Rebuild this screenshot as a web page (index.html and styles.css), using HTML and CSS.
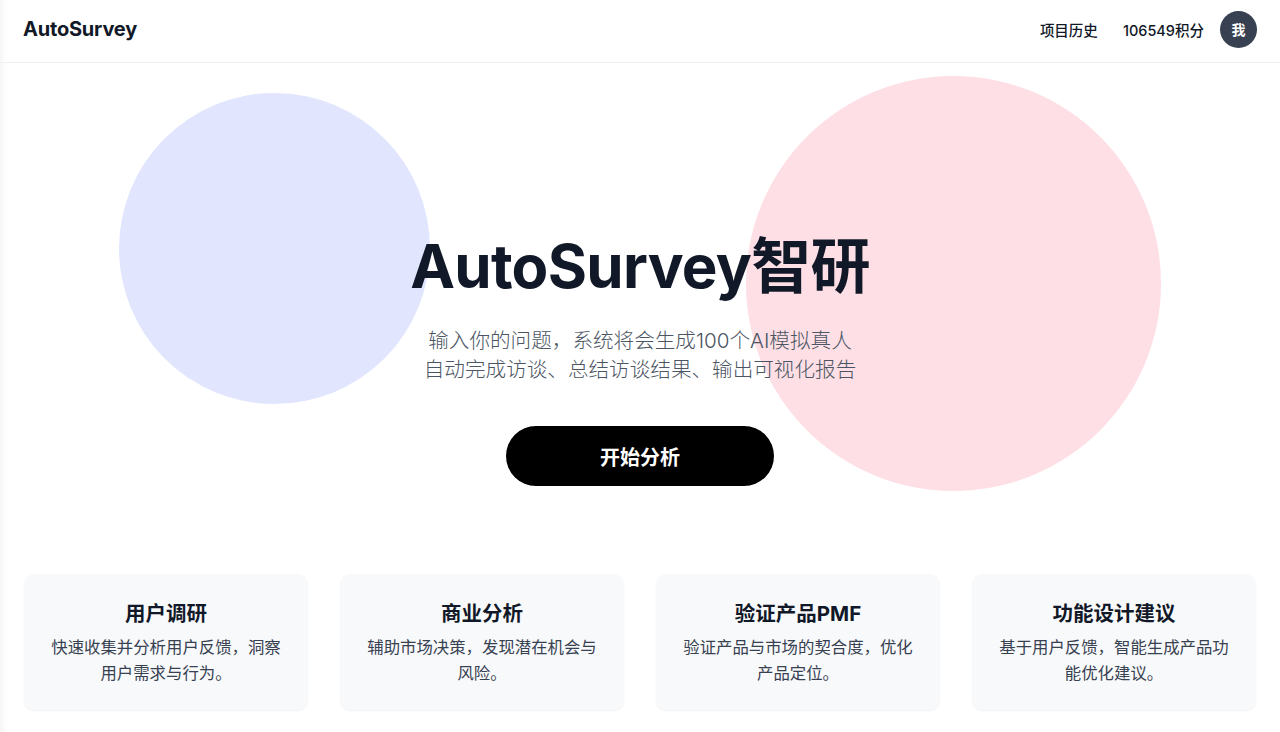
FILE: index.html
```html
<!DOCTYPE html>
<html lang="zh-CN">

<head>
    <meta charset="UTF-8">
    <meta name="viewport" content="width=device-width, initial-scale=1.0">
    <title>AutoSurvey智研</title>
    <link rel="stylesheet" href="styles.css">
</head>

<body>
    <div class="page">
        <header class="topbar">
            <div class="logo">AutoSurvey</div>
            <nav class="nav">
                <a href="#" class="nav-link">项目历史</a>
                <span class="credits">106549积分</span>
                <div class="avatar">我</div>
            </nav>
        </header>

        <main class="hero">
            <!-- 背景装饰圆 -->
            <div class="blob blob-blue"></div>
            <div class="blob blob-pink"></div>

            <h1 class="hero-title">AutoSurvey智研</h1>
            <p class="hero-desc">输入你的问题，系统将会生成100个AI模拟真人<br>自动完成访谈、总结访谈结果、输出可视化报告</p>
            <button class="start-btn">开始分析</button>
        </main>

        <section class="features">
            <div class="card">
                <h3>用户调研</h3>
                <p>快速收集并分析用户反馈，洞察用户需求与行为。</p>
            </div>
            <div class="card">
                <h3>商业分析</h3>
                <p>辅助市场决策，发现潜在机会与风险。</p>
            </div>
            <div class="card">
                <h3>验证产品PMF</h3>
                <p>验证产品与市场的契合度，优化产品定位。</p>
            </div>
            <div class="card">
                <h3>功能设计建议</h3>
                <p>基于用户反馈，智能生成产品功能优化建议。</p>
            </div>
        </section>
    </div>
</body>

</html>
```

FILE: styles.css
```css
body {
    margin: 0;
    padding: 0;
    font-family: Inter, "Noto Sans CJK SC", sans-serif;
    background-color: #fff;
    color: #111827;
}

.page {
    min-height: 732px;
    box-shadow: inset 10px 0 10px -10px rgba(0, 0, 0, 0.08);
}

.topbar {
    box-sizing: border-box;
    height: 63px;
    padding: 0 23px 4px 23px;
    display: flex;
    align-items: center;
    justify-content: space-between;
    border-bottom: 1px solid #f1f1f3;
}

.logo {
    font-size: 20px;
    font-weight: 700;
    letter-spacing: -0.2px;
    color: #111827;
}

.nav {
    display: flex;
    align-items: center;
}

.nav-link,
.credits {
    font-size: 14.5px;
    font-weight: 500;
    color: #111827;
    text-decoration: none;
}

.credits {
    margin-left: 25px;
}

.avatar {
    width: 37px;
    height: 37px;
    margin-left: 16px;
    border-radius: 50%;
    background-color: #374151;
    color: #fff;
    font-size: 14px;
    font-weight: 600;
    display: flex;
    align-items: center;
    justify-content: center;
}

.hero {
    position: relative;
    padding-top: 167px;
    display: flex;
    flex-direction: column;
    align-items: center;
    text-align: center;
}

.blob {
    position: absolute;
    border-radius: 50%;
}

.blob-blue {
    top: 30px;
    left: 119px;
    width: 311px;
    height: 311px;
    background-color: #e1e6fe;
}

.blob-pink {
    top: 13px;
    left: 746px;
    width: 415px;
    height: 415px;
    background-color: #fddfe5;
}

.hero-title {
    position: relative;
    margin: 0 0 24px;
    font-size: 60px;
    line-height: 72px;
    font-weight: 700;
    letter-spacing: -0.7px;
    color: #111827;
}

.hero-desc {
    position: relative;
    margin: 0 0 42px;
    font-size: 20.6px;
    line-height: 29px;
    font-weight: 300;
    color: #4b5563;
}

.start-btn {
    position: relative;
    width: 268px;
    height: 60px;
    border: none;
    border-radius: 30px;
    background-color: #000;
    color: #fff;
    font-family: inherit;
    font-size: 20px;
    font-weight: 600;
    cursor: pointer;
}

.features {
    margin-top: 88px;
    padding: 0 24px;
    display: grid;
    grid-template-columns: repeat(4, 1fr);
    gap: 32px;
}

.card {
    padding: 26px 24px 24px;
    background-color: #f8f9fb;
    border-radius: 10px;
    box-shadow: 0 1px 2px rgba(0, 0, 0, 0.05);
    text-align: center;
}

.card h3 {
    margin: 0 0 6px;
    font-size: 20.5px;
    line-height: 28px;
    font-weight: 700;
    color: #111827;
}

.card p {
    margin: 0;
    font-size: 16.4px;
    line-height: 26px;
    color: #374151;
}
```
